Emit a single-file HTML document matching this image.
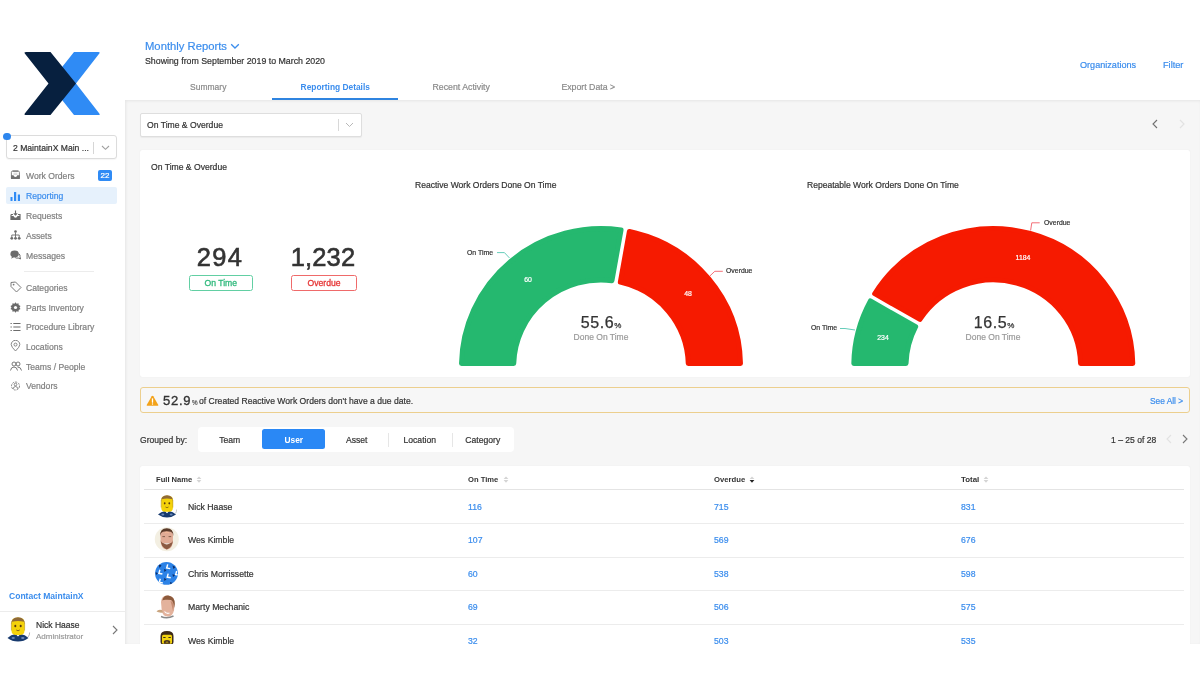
<!DOCTYPE html>
<html><head><meta charset="utf-8">
<style>
*{box-sizing:border-box;margin:0;padding:0}
html,body{width:1200px;height:675px;overflow:hidden;background:#fff}
body{font-family:"Liberation Sans",sans-serif;color:#333;position:relative}
.t,.nav span{will-change:transform;-webkit-text-stroke:0.2px currentColor}
.b{-webkit-text-stroke:0 !important}
.a{position:absolute;white-space:nowrap}
.t{position:absolute;white-space:nowrap;line-height:12px;height:12px}
#side{position:absolute;left:0;top:0;width:125px;height:644px;background:#fff}
#main{position:absolute;left:125px;top:100px;width:1075px;height:544px;background:#f6f6f6;box-shadow:inset 1px 1px 3px rgba(0,0,0,0.07)}
.nav{position:absolute;left:6px;width:110px;height:16px;font-size:8.6px;color:#808080;line-height:16px}
.nav span{position:absolute;left:20px;top:0.5px}
.nav svg{position:absolute;left:4px;top:3px}
.blue{color:#3b8ded}
.card{position:absolute;background:#fff;border-radius:3px}
</style></head><body>

<div id="side">
  <!-- logo -->
  <svg class="a" style="left:0;top:0" width="125" height="125" viewBox="0 0 125 125">
    <path d="M74 52 L98.5 52 Q100.5 52 99.3 53.6 L76 83.5 L99.3 113.4 Q100.5 115 98.5 115 L74 115 L49 83.5 Z" fill="#2f8bf5"/>
    <path d="M26 52 L50.5 52 L76 83.5 L50.5 115 L26 115 Q23.5 115 25 113.2 L48.5 83.5 L25 53.8 Q23.5 52 26 52 Z" fill="#07203f"/>
  </svg>

  <!-- location dropdown -->
  <div class="a" style="left:6px;top:135px;width:110.5px;height:24.3px;border:1px solid #dcdcdc;border-radius:3px;background:#fff;box-shadow:0 1px 1px rgba(0,0,0,0.04)"></div>
  <div class="a" style="left:3.2px;top:133px;width:7.4px;height:7.4px;border-radius:50%;background:#2d86ee"></div>
  <div class="t" style="left:12.5px;top:141.5px;font-size:8.6px;color:#333">2 MaintainX Main ...</div>
  <div class="a" style="left:93px;top:141.5px;width:1px;height:12px;background:#d6d6d6"></div>
  <svg class="a" style="left:100.5px;top:145px" width="9" height="6" viewBox="0 0 9 6"><path d="M1 1 L4.5 4.3 L8 1" fill="none" stroke="#a0a0a0" stroke-width="1.1"/></svg>

  <!-- nav -->
  <div class="nav" style="top:167px">
    <svg width="11" height="10" viewBox="0 0 11 10"><path d="M1.4 8.5 V2.3 Q1.4 1.1 2.6 1.1 H8.2 Q9.4 1.1 9.4 2.3 V8.5" fill="none" stroke="#777" stroke-width="0.9"/><path d="M2.6 1.1 H8.2" stroke="#777" stroke-width="1.2"/><path d="M3.5 3.2 H7.3 M3.5 4.4 H7.3" stroke="#aaa" stroke-width="0.5"/><path d="M1 5.2 H3.5 Q3.8 7 5.4 7 Q7 7 7.3 5.2 H9.8 V9 H1 Z" fill="#707070"/></svg>
    <span>Work Orders</span>
  </div>
  <div class="a" style="left:98px;top:170px;width:14px;height:10.5px;border-radius:2px;background:#2f8bf5"></div><div class="t" style="left:98px;top:169.5px;width:14px;text-align:center;font-size:8px;color:#fff">22</div>
  <div class="a" style="left:6px;top:187px;width:110.5px;height:17px;background:#e6f1fc;border-radius:2px"></div>
  <div class="nav" style="top:187.5px;color:#3b8ded">
    <svg width="11" height="10" viewBox="0 0 11 10"><rect x="0.5" y="6" width="2" height="4" fill="#2f8bf5"/><rect x="4" y="1" width="2.2" height="9" fill="#2f8bf5"/><rect x="7.8" y="3.5" width="2.2" height="6.5" fill="#2f8bf5"/></svg>
    <span>Reporting</span>
  </div>
  <div class="nav" style="top:207px">
    <svg width="11" height="10" viewBox="0 0 11 10"><path d="M1 4.5 L1 9.5 L10 9.5 L10 4.5 L8 4.5 M3 4.5 L1 4.5" fill="none" stroke="#6b6b6b" stroke-width="1.2"/><path d="M1 6 L3.5 6 Q4 7.8 5.5 7.8 Q7 7.8 7.5 6 L10 6 L10 9.5 L1 9.5 Z" fill="#6b6b6b"/><path d="M5.5 0.5 V5 M3.8 3.3 L5.5 5 L7.2 3.3" fill="none" stroke="#6b6b6b" stroke-width="1.1"/></svg>
    <span>Requests</span>
  </div>
  <div class="nav" style="top:227px">
    <svg width="11" height="10" viewBox="0 0 11 10"><circle cx="5.5" cy="1.5" r="1.3" fill="#6b6b6b"/><path d="M5.5 2.5 V5 M1.8 7 V5 H9.2 V7 M5.5 5 V7" fill="none" stroke="#6b6b6b" stroke-width="0.9"/><circle cx="1.8" cy="8.3" r="1.4" fill="#6b6b6b"/><circle cx="5.5" cy="8.3" r="1.4" fill="#6b6b6b"/><circle cx="9.2" cy="8.3" r="1.4" fill="#6b6b6b"/></svg>
    <span>Assets</span>
  </div>
  <div class="nav" style="top:247px">
    <svg width="11" height="10" viewBox="0 0 11 10"><ellipse cx="4.6" cy="4" rx="4.2" ry="3.4" fill="#6b6b6b"/><path d="M2 6.5 L1.2 8.8 L4 7" fill="#6b6b6b"/><path d="M8.8 3.6 Q10.5 4.8 10 6.8 L10.5 9 L8.2 8 Q6.5 8.5 5.2 7.6" fill="none" stroke="#6b6b6b" stroke-width="1"/></svg>
    <span>Messages</span>
  </div>
  <div class="a" style="left:24px;top:271px;width:70px;height:1px;background:#ececec"></div>
  <div class="nav" style="top:279px">
    <svg width="12" height="12" viewBox="0 0 12 12" style="top:2px"><path d="M1 1.5 L5.5 1 L11 6.5 L6.5 11 L1 5.5 Z" fill="none" stroke="#7a7a7a" stroke-width="1" stroke-linejoin="round"/><circle cx="3.6" cy="3.6" r="0.9" fill="#7a7a7a"/></svg>
    <span>Categories</span>
  </div>
  <div class="nav" style="top:299px">
    <svg width="11" height="11" viewBox="0 0 11 11" style="top:2.5px"><path d="M5.5 0.3 L6.6 1.8 L8.5 1.2 L8.7 3.1 L10.5 3.9 L9.5 5.5 L10.5 7.1 L8.7 7.9 L8.5 9.8 L6.6 9.2 L5.5 10.7 L4.4 9.2 L2.5 9.8 L2.3 7.9 L0.5 7.1 L1.5 5.5 L0.5 3.9 L2.3 3.1 L2.5 1.2 L4.4 1.8 Z" fill="#6b6b6b"/><circle cx="5.5" cy="5.5" r="1.6" fill="#fff"/></svg>
    <span>Parts Inventory</span>
  </div>
  <div class="nav" style="top:318.5px">
    <svg width="11" height="10" viewBox="0 0 11 10"><path d="M0.5 1.5 H1.8 M3.3 1.5 H10.5 M0.5 5 H1.8 M3.3 5 H10.5 M0.5 8.5 H1.8 M3.3 8.5 H10.5" stroke="#6b6b6b" stroke-width="1.2"/></svg>
    <span>Procedure Library</span>
  </div>
  <div class="nav" style="top:338px">
    <svg width="11" height="12" viewBox="0 0 11 12" style="top:2px"><path d="M5.5 11 Q1.2 6.8 1.2 4.6 A4.3 4.3 0 0 1 9.8 4.6 Q9.8 6.8 5.5 11 Z" fill="none" stroke="#7a7a7a" stroke-width="0.9"/><circle cx="5.5" cy="4.6" r="1.5" fill="none" stroke="#7a7a7a" stroke-width="0.9"/></svg>
    <span>Locations</span>
  </div>
  <div class="nav" style="top:358px">
    <svg width="12" height="11" viewBox="0 0 12 11" style="top:2.5px"><circle cx="4" cy="3" r="2" fill="none" stroke="#6b6b6b" stroke-width="0.9"/><path d="M0.5 9.5 Q1 6 4 6 Q7 6 7.5 9.5" fill="none" stroke="#6b6b6b" stroke-width="0.9"/><circle cx="8" cy="3" r="2" fill="none" stroke="#6b6b6b" stroke-width="0.9"/><path d="M7.5 6 Q11 6 11.5 9.5" fill="none" stroke="#6b6b6b" stroke-width="0.9"/></svg>
    <span>Teams / People</span>
  </div>
  <div class="nav" style="top:377.5px">
    <svg width="11" height="12" viewBox="0 0 11 12" style="top:2px"><circle cx="5.5" cy="6" r="4" fill="none" stroke="#7a7a7a" stroke-width="0.9" stroke-dasharray="2 1"/><circle cx="5.5" cy="4.5" r="1.3" fill="none" stroke="#7a7a7a" stroke-width="0.9"/><path d="M3 9 Q3.5 6.5 5.5 6.5 Q7.5 6.5 8 9" fill="none" stroke="#7a7a7a" stroke-width="0.9"/></svg>
    <span>Vendors</span>
  </div>

  <!-- bottom -->
  <div class="t b" style="left:8.5px;top:590px;font-size:8.55px;font-weight:700;color:#3b8ded">Contact MaintainX</div>
  <div class="a" style="left:0;top:611px;width:125px;height:1px;background:#ececec"></div>
  <svg class="a" style="left:5px;top:615px" width="30" height="30" viewBox="0 0 30 30">
  <path d="M2.5 23 Q6 19.5 10.5 19 L13 21.3 L15.5 19 Q20 19.5 23.5 23 Q19 26.5 13 26.5 Q7 26.5 2.5 23 Z" fill="#173a6e"/>
  <ellipse cx="8.2" cy="23" rx="1.7" ry="1.1" fill="#6b86b8"/><ellipse cx="17.8" cy="23" rx="1.7" ry="1.1" fill="#6b86b8"/>
  <path d="M11 19.3 L13 21.4 L15 19.3 Z" fill="#f0f0f0"/>
  <path d="M23 22 Q24.8 20 24.6 17.5" fill="none" stroke="#aaa" stroke-width="0.9"/>
  <path d="M6.5 7 Q6.5 3 13 2.6 Q19.5 3 19.5 7 L19.5 15.8 Q19.5 19.8 15.5 20 L10.5 20 Q6.5 19.8 6.5 15.8 Z" fill="#f4d20a"/>
  <path d="M6.2 9.8 Q6 2.4 13 2.3 Q20 2.4 19.8 9.8 L19 6.8 Q13 5 7 6.8 Z" fill="#8f6a38"/>
  <path d="M6.4 8 V15.5 M19.6 8 V15.5" stroke="#b8960c" stroke-width="0.6"/>
  <ellipse cx="10.3" cy="11" rx="1" ry="1.2" fill="#5a3a10"/><ellipse cx="15.7" cy="11" rx="1" ry="1.2" fill="#5a3a10"/>
  <path d="M11.3 15 Q13 16.6 14.7 15" fill="none" stroke="#7a5a10" stroke-width="0.9"/>
</svg>
  <div class="t" style="left:35.8px;top:618.5px;font-size:8.5px;color:#333">Nick Haase</div>
  <div class="t" style="left:35.8px;top:630.5px;font-size:8px;color:#9a9a9a">Administrator</div>
  <svg class="a" style="left:111px;top:625px" width="8" height="10" viewBox="0 0 8 10"><path d="M2 1 L6 5 L2 9" fill="none" stroke="#777" stroke-width="1.1"/></svg>
</div>

<div id="main"></div>

<!-- header -->
<div class="t" style="left:145px;top:40px;font-size:11.25px;line-height:13px;height:13px;color:#3b8ded">Monthly Reports</div>
<svg class="a" style="left:229.5px;top:43px" width="10" height="7" viewBox="0 0 10 7"><path d="M1.2 1.2 L5 5 L8.8 1.2" fill="none" stroke="#3b8ded" stroke-width="1.3"/></svg>
<div class="t" style="left:145px;top:54.5px;font-size:8.8px;color:#333">Showing from September 2019 to March 2020</div>
<div class="t" style="left:1079.5px;top:58.5px;font-size:9.1px;color:#3b8ded">Organizations</div>
<div class="t" style="left:1162.5px;top:58.5px;font-size:9.2px;color:#3b8ded">Filter</div>
<div class="t" style="left:145px;top:81px;width:126.5px;text-align:center;font-size:8.5px;color:#8a8a8a">Summary</div>
<div class="t b" style="left:271.5px;top:81px;width:126.5px;text-align:center;font-size:8.4px;font-weight:700;color:#3b8ded">Reporting Details</div>
<div class="a" style="left:271.5px;top:97.8px;width:126.5px;height:2.2px;background:#2f84e0"></div>
<div class="t" style="left:398px;top:81px;width:126.5px;text-align:center;font-size:8.75px;color:#8a8a8a">Recent Activity</div>
<div class="t" style="left:524.5px;top:81px;width:126.5px;text-align:center;font-size:8.75px;color:#8a8a8a">Export Data &gt;</div>


<!-- main content -->
<div class="a" style="left:140px;top:112.5px;width:221.5px;height:24px;background:#fff;border:1px solid #dedede;border-radius:2px;box-shadow:0 1px 1px rgba(0,0,0,0.05)"></div>
<div class="t" style="left:147px;top:118.5px;font-size:8.6px;color:#333">On Time &amp; Overdue</div>
<div class="a" style="left:337.5px;top:118.5px;width:1px;height:12px;background:#d8d8d8"></div>
<svg class="a" style="left:345px;top:122px" width="9" height="6" viewBox="0 0 9 6"><path d="M1 1 L4.5 4.5 L8 1" fill="none" stroke="#b8b8b8" stroke-width="1"/></svg>
<svg class="a" style="left:1151px;top:119px" width="8" height="10" viewBox="0 0 8 10"><path d="M6 1 L2 5 L6 9" fill="none" stroke="#707070" stroke-width="1.1"/></svg>
<svg class="a" style="left:1178px;top:119px" width="8" height="10" viewBox="0 0 8 10"><path d="M2 1 L6 5 L2 9" fill="none" stroke="#e2e2e2" stroke-width="1.2"/></svg>

<div class="card" style="left:140px;top:149.5px;width:1049.5px;height:227px;border-radius:2px;box-shadow:0 0 1px rgba(0,0,0,0.1)"></div>
<div class="t" style="left:150.5px;top:161px;font-size:8.6px;color:#333">On Time &amp; Overdue</div>
<div class="t" style="left:180px;top:244px;width:80px;height:26px;line-height:26px;text-align:center;font-size:25.5px;letter-spacing:1.3px;color:#333;-webkit-text-stroke:0.6px #333">294</div>
<div class="t" style="left:283px;top:244px;width:80px;height:26px;line-height:26px;text-align:center;font-size:25.5px;letter-spacing:0.15px;color:#333;-webkit-text-stroke:0.6px #333">1,232</div>
<div class="a" style="left:188.5px;top:274.5px;width:63.5px;height:16px;border:1px solid #62cfa3;border-radius:2.5px;color:#2fb97c;font-size:8.6px;font-weight:400;-webkit-text-stroke:0.3px #2fb97c;will-change:transform;line-height:14px;text-align:center">On Time</div>
<div class="a" style="left:290.5px;top:274.5px;width:66px;height:16px;border:1px solid #ef6a6a;border-radius:2.5px;color:#e63535;font-size:8.6px;font-weight:400;-webkit-text-stroke:0.3px #e63535;will-change:transform;line-height:14px;text-align:center">Overdue</div>

<div class="t" style="left:415px;top:179px;font-size:8.55px;color:#333">Reactive Work Orders Done On Time</div>
<div class="t" style="left:807px;top:179px;font-size:8.55px;color:#333">Repeatable Work Orders Done On Time</div>
<svg class="a" style="left:0;top:0" width="1200" height="400" viewBox="0 0 1200 400">
  <g transform="translate(0 366) scale(1 0.985) translate(0 -366)">
  <path d="M513.74 363.50 L461.52 363.50 A139.50 139.50 0 0 1 621.03 227.95 L611.96 279.39 A87.30 87.30 0 0 0 513.74 363.50 Z" fill="#25b86f" stroke="#25b86f" stroke-width="5" stroke-linejoin="round"/>
  <path d="M620.33 280.87 L629.40 229.42 A139.50 139.50 0 0 1 740.48 363.50 L688.26 363.50 A87.30 87.30 0 0 0 620.33 280.87 Z" fill="#f61a00" stroke="#f61a00" stroke-width="5" stroke-linejoin="round"/>
  <path d="M906.04 363.50 L853.82 363.50 A139.50 139.50 0 0 1 870.42 299.96 L915.66 326.08 A87.30 87.30 0 0 0 906.04 363.50 Z" fill="#25b86f" stroke="#25b86f" stroke-width="5" stroke-linejoin="round"/>
  <path d="M919.91 318.72 L874.67 292.60 A139.50 139.50 0 0 1 1132.78 363.50 L1080.56 363.50 A87.30 87.30 0 0 0 919.91 318.72 Z" fill="#f61a00" stroke="#f61a00" stroke-width="5" stroke-linejoin="round"/>
  </g>
  <path d="M497 252.6 H504.4 L509.5 258" fill="none" stroke="#3fc0a8" stroke-width="0.8"/>
  <path d="M709.8 276 L714.8 271.3 H722.8" fill="none" stroke="#f04a55" stroke-width="0.8"/>
  <path d="M840 328.5 H845 L855 330" fill="none" stroke="#3fc0a8" stroke-width="0.8"/>
  <path d="M1030.6 230.5 L1031.8 222.8 H1039.7" fill="none" stroke="#f04a55" stroke-width="0.8"/>
</svg>
<div class="t" style="left:467px;top:246.5px;font-size:6.9px;color:#333">On Time</div>
<div class="t" style="left:726px;top:265px;font-size:6.9px;color:#333">Overdue</div>
<div class="t" style="left:811px;top:322px;font-size:6.9px;color:#333">On Time</div>
<div class="t" style="left:1043.5px;top:217px;font-size:6.9px;color:#333">Overdue</div>
<div class="t" style="left:507.5px;top:274px;width:40px;text-align:center;font-size:6.9px;color:#fff">60</div>
<div class="t" style="left:668px;top:288px;width:40px;text-align:center;font-size:6.9px;color:#fff">48</div>
<div class="t" style="left:863px;top:331.5px;width:40px;text-align:center;font-size:6.9px;color:#fff">234</div>
<div class="t" style="left:1003px;top:252px;width:40px;text-align:center;font-size:6.9px;color:#fff">1184</div>
<div class="t" style="left:559px;top:315.2px;width:84px;height:16px;line-height:16px;text-align:center;font-size:16px;color:#333;-webkit-text-stroke:0.25px #333"><span style="letter-spacing:0.6px">55.6</span><span style="font-size:8px;letter-spacing:0">%</span></div>
<div class="t" style="left:561px;top:331px;width:80px;text-align:center;font-size:8.5px;color:#999">Done On Time</div>
<div class="t" style="left:951.5px;top:315.2px;width:84px;height:16px;line-height:16px;text-align:center;font-size:16px;color:#333;-webkit-text-stroke:0.25px #333"><span style="letter-spacing:0.6px">16.5</span><span style="font-size:8px;letter-spacing:0">%</span></div>
<div class="t" style="left:953px;top:331px;width:80px;text-align:center;font-size:8.5px;color:#999">Done On Time</div>

<!-- alert -->
<div class="a" style="left:140px;top:386.8px;width:1049.5px;height:26.4px;border:1px solid #eccf8e;border-radius:3px;background:#f7f7f7"></div>
<svg class="a" style="left:146px;top:395px" width="13" height="11.5" viewBox="0 0 13 11.5"><path d="M6.5 0.8 Q7 0.8 7.3 1.3 L12.3 10 Q12.6 10.8 11.8 10.8 L1.2 10.8 Q0.4 10.8 0.7 10 L5.7 1.3 Q6 0.8 6.5 0.8 Z" fill="#f3a219"/><path d="M6.5 3.8 V7.2" stroke="#fff" stroke-width="1.3" stroke-linecap="round"/><circle cx="6.5" cy="9" r="0.7" fill="#fff"/></svg>
<div class="t" style="left:163px;top:394.3px;height:14px;line-height:14px;font-size:13px;letter-spacing:0.75px;color:#333;-webkit-text-stroke:0.35px #333">52.9</div>
<div class="t" style="left:191.6px;top:397.3px;font-size:6.3px;color:#555">%</div>
<div class="t" style="left:199.4px;top:395px;font-size:8.6px;color:#333">of Created Reactive Work Orders don&#39;t have a due date.</div>
<div class="t" style="left:1149.5px;top:394.5px;font-size:8.35px;color:#3b8ded">See All &gt;</div>

<!-- grouped by -->
<div class="t" style="left:140.4px;top:433.5px;font-size:8.55px;color:#333">Grouped by:</div>
<div class="a" style="left:198px;top:426.5px;width:315.5px;height:25.5px;background:#fff;border-radius:4px"></div>
<div class="a" style="left:261.5px;top:429px;width:63.5px;height:20.3px;background:#2a88f5;border-radius:2.5px"></div>
<div class="a" style="left:388px;top:432.5px;width:1px;height:14.5px;background:#e6e6e6"></div>
<div class="a" style="left:451.5px;top:432.5px;width:1px;height:14.5px;background:#e6e6e6"></div>
<div class="t" style="left:198px;top:433.5px;width:63.5px;text-align:center;font-size:8.6px;color:#333">Team</div>
<div class="t b" style="left:261.5px;top:433.5px;width:63.5px;text-align:center;font-size:8.4px;font-weight:700;color:#fff">User</div>
<div class="t" style="left:325px;top:433.5px;width:63.5px;text-align:center;font-size:8.6px;color:#333">Asset</div>
<div class="t" style="left:388px;top:433.5px;width:63.5px;text-align:center;font-size:8.6px;color:#333">Location</div>
<div class="t" style="left:450.5px;top:433.5px;width:63.5px;text-align:center;font-size:8.6px;color:#333">Category</div>
<div class="t" style="left:1110.8px;top:433.5px;font-size:8.55px;color:#333">1 – 25 of 28</div>
<svg class="a" style="left:1165px;top:434px" width="8" height="10" viewBox="0 0 8 10"><path d="M6 1 L2 5 L6 9" fill="none" stroke="#e2e2e2" stroke-width="1.1"/></svg>
<svg class="a" style="left:1181px;top:434px" width="8" height="10" viewBox="0 0 8 10"><path d="M2 1 L6 5 L2 9" fill="none" stroke="#777" stroke-width="1.1"/></svg>

<!-- table -->
<div class="card" style="left:140px;top:465.5px;width:1049.5px;height:200px;border-radius:2px 2px 0 0;box-shadow:0 0 1px rgba(0,0,0,0.1)"></div>
<div class="t b" style="left:155.5px;top:474px;font-size:7.6px;font-weight:700;color:#333">Full Name</div>
<div class="t b" style="left:467.8px;top:474px;font-size:7.6px;font-weight:700;color:#333">On Time</div>
<div class="t b" style="left:713.7px;top:474px;font-size:7.7px;font-weight:700;color:#333">Overdue</div>
<div class="t b" style="left:960.8px;top:474px;font-size:7.9px;font-weight:700;color:#333">Total</div>
<svg class="a" style="left:196.2px;top:476px" width="6" height="8" viewBox="0 0 6 8"><path d="M0.6 3 L3 0.6 L5.4 3 Z" fill="#d4d4d4"/><path d="M0.6 4.1 L3 6.7 L5.4 4.1 Z" fill="#d4d4d4"/></svg><svg class="a" style="left:502.8px;top:476px" width="6" height="8" viewBox="0 0 6 8"><path d="M0.6 3 L3 0.6 L5.4 3 Z" fill="#d4d4d4"/><path d="M0.6 4.1 L3 6.7 L5.4 4.1 Z" fill="#d4d4d4"/></svg><svg class="a" style="left:748.9px;top:476px" width="6" height="8" viewBox="0 0 6 8"><path d="M0.6 3 L3 0.6 L5.4 3 Z" fill="#d4d4d4"/><path d="M0.6 4.1 L3 6.7 L5.4 4.1 Z" fill="#222"/></svg><svg class="a" style="left:983.3px;top:476px" width="6" height="8" viewBox="0 0 6 8"><path d="M0.6 3 L3 0.6 L5.4 3 Z" fill="#d4d4d4"/><path d="M0.6 4.1 L3 6.7 L5.4 4.1 Z" fill="#d4d4d4"/></svg>
<div class="a" style="left:144px;top:489px;width:1040px;height:1px;background:#e4e4e4"></div>
<div class="t" style="left:188px;top:500.5px;font-size:8.7px;color:#333">Nick Haase</div>
<div class="t" style="left:467.8px;top:500.5px;font-size:8.7px;color:#3b8ded">116</div>
<div class="t" style="left:713.7px;top:500.5px;font-size:8.7px;color:#3b8ded">715</div>
<div class="t" style="left:960.8px;top:500.5px;font-size:8.7px;color:#3b8ded">831</div>
<div class="a" style="left:144px;top:523.0px;width:1040px;height:1px;background:#ececec"></div>
<div class="t" style="left:188px;top:534px;font-size:8.7px;color:#333">Wes Kimble</div>
<div class="t" style="left:467.8px;top:534px;font-size:8.7px;color:#3b8ded">107</div>
<div class="t" style="left:713.7px;top:534px;font-size:8.7px;color:#3b8ded">569</div>
<div class="t" style="left:960.8px;top:534px;font-size:8.7px;color:#3b8ded">676</div>
<div class="a" style="left:144px;top:556.5px;width:1040px;height:1px;background:#ececec"></div>
<div class="t" style="left:188px;top:567.5px;font-size:8.7px;color:#333">Chris Morrissette</div>
<div class="t" style="left:467.8px;top:567.5px;font-size:8.7px;color:#3b8ded">60</div>
<div class="t" style="left:713.7px;top:567.5px;font-size:8.7px;color:#3b8ded">538</div>
<div class="t" style="left:960.8px;top:567.5px;font-size:8.7px;color:#3b8ded">598</div>
<div class="a" style="left:144px;top:590.0px;width:1040px;height:1px;background:#ececec"></div>
<div class="t" style="left:188px;top:601px;font-size:8.7px;color:#333">Marty Mechanic</div>
<div class="t" style="left:467.8px;top:601px;font-size:8.7px;color:#3b8ded">69</div>
<div class="t" style="left:713.7px;top:601px;font-size:8.7px;color:#3b8ded">506</div>
<div class="t" style="left:960.8px;top:601px;font-size:8.7px;color:#3b8ded">575</div>
<div class="a" style="left:144px;top:623.5px;width:1040px;height:1px;background:#ececec"></div>
<div class="t" style="left:188px;top:634.5px;font-size:8.7px;color:#333">Wes Kimble</div>
<div class="t" style="left:467.8px;top:634.5px;font-size:8.7px;color:#3b8ded">32</div>
<div class="t" style="left:713.7px;top:634.5px;font-size:8.7px;color:#3b8ded">503</div>
<div class="t" style="left:960.8px;top:634.5px;font-size:8.7px;color:#3b8ded">535</div>

<!-- avatars -->
<svg class="a" style="left:152px;top:492px" width="30" height="30" viewBox="0 0 30 30">
  <path d="M6 22.5 Q9 19.5 13 19 L15 21 L17 19 Q21 19.5 24 22.5 Q20 25.5 15 25.5 Q10 25.5 6 22.5 Z" fill="#173a6e"/>
  <ellipse cx="10.8" cy="22.5" rx="1.5" ry="1" fill="#6b86b8"/><ellipse cx="19.2" cy="22.5" rx="1.5" ry="1" fill="#6b86b8"/>
  <path d="M13.2 19.3 L15 21.2 L16.8 19.3 Z" fill="#f0f0f0"/>
  <path d="M23.5 21.5 Q24.8 19.8 24.5 17.5" fill="none" stroke="#bbb" stroke-width="0.8"/>
  <path d="M9.3 7.5 Q9.3 4 15 3.6 Q20.9 4 20.9 7.5 L20.9 16 Q20.9 19.5 17 19.7 L13 19.7 Q9.3 19.5 9.3 16 Z" fill="#f4d20a"/>
  <path d="M9 10 Q8.8 3.4 15 3.3 Q21.2 3.4 21 10 L20.3 7.3 Q15 5.6 9.7 7.3 Z" fill="#8f6a38"/>
  <path d="M9.2 8 V15.5 M20.8 8 V15.5" stroke="#b8960c" stroke-width="0.6"/>
  <ellipse cx="12.7" cy="11.3" rx="0.9" ry="1.1" fill="#5a3a10"/><ellipse cx="17.3" cy="11.3" rx="0.9" ry="1.1" fill="#5a3a10"/>
  <path d="M13.5 15 Q15 16.4 16.5 15" fill="none" stroke="#7a5a10" stroke-width="0.8"/>
</svg>
<svg class="a" style="left:152px;top:524px" width="30" height="30" viewBox="0 0 30 30">
  <circle cx="14.8" cy="15.2" r="12" fill="#f3efe2"/>
  <path d="M8.4 11 Q8.4 4.8 14.8 4.8 Q21 4.8 21 11 L20.8 19 Q19.5 25.5 14.8 25.5 Q10.1 25.5 8.8 19 Z" fill="#e0ab95"/>
  <path d="M8.2 12 Q7.8 4.2 14.8 4.2 Q21.6 4.2 21.3 12 L20.6 9.3 Q19.5 7.3 14.8 7.3 Q10.1 7.3 9 9.3 Z" fill="#5a3b2a"/>
  <path d="M8.6 16 Q9 23.5 14.8 25.4 Q20.6 23.5 20.9 16 Q20 19.4 17.8 19.3 L14.8 19.3 L11.8 19.3 Q9.6 19.4 8.6 16 Z" fill="#8a5a42"/>
  <path d="M11.2 18.8 Q14.8 22.4 18.4 18.8 Q14.8 19.9 11.2 18.8 Z" fill="#fbf3ee"/>
  <path d="M10.4 12.6 H13 M16.6 12.6 H19.2" stroke="#6a4a38" stroke-width="0.8"/>
  <path d="M13 8.6 Q15 7.8 17 8.8" fill="none" stroke="#f4b898" stroke-width="1.2"/>
</svg>
<svg class="a" style="left:152px;top:558px" width="30" height="30" viewBox="0 0 30 30">
  <defs><clipPath id="cc"><circle cx="14.5" cy="15.4" r="11.4"/></clipPath></defs>
  <circle cx="14.5" cy="15.4" r="11.4" fill="#2c82e6"/>
  <g clip-path="url(#cc)">
    <g fill="#0c2c66"><path d="M6.5 6 L9.5 7.5 L7.5 10 Z"/><path d="M12 11 L14.5 12 L12.5 14 Z"/><path d="M20.5 7.5 L23.5 9 L21.5 11 Z"/><path d="M3.5 14 L6 15.2 L4 17 Z"/><path d="M12 20 L14.5 21.2 L12.5 23 Z"/><path d="M20.5 16 L23 17.2 L21 19 Z"/><path d="M18 24 L20.5 25 L18.5 27 Z"/></g>
    <g fill="#fff"><path d="M15 6.2 L16.4 6.6 L15.6 9.4 L18.4 9.9 L18 11.3 L13.8 10.5 Z"/><path d="M7.2 11.6 L8.6 12 L7.8 14.8 L10.6 15.3 L10.2 16.7 L6 15.9 Z"/><path d="M15.5 15.4 L16.9 15.8 L16.1 18.6 L18.9 19.1 L18.5 20.5 L14.3 19.7 Z"/><path d="M24 12.8 L25.4 13.2 L24.6 16 L26 16.3 L25.6 17.7 L22.8 17.1 Z"/><path d="M7.6 20.6 L9 21 L8.2 23.8 L11 24.3 L10.6 25.7 L6.4 24.9 Z"/></g>
  </g>
</svg>
<svg class="a" style="left:152px;top:592px" width="30" height="30" viewBox="0 0 30 30">
  <path d="M9 10 Q9.5 3.5 15.5 3.6 Q22.8 4 22.5 11.5 L22 18.5 Q20.5 24.5 16 24.5 Q10.8 24.5 9.8 19 Z" fill="#e3b29c"/>
  <path d="M10.3 8.5 Q11.5 3 16.5 3.6 Q22.8 4.6 22.8 12 L22.2 16 Q21.5 9 19 8 Q16 7.5 13.5 7.8 Q11.5 8 10.3 8.5 Z" fill="#8c5a3c"/>
  <path d="M18.5 9 Q22 10 21.8 15 L21 19 Q20 14 18.5 9 Z" fill="#b87a60" opacity="0.7"/>
  <path d="M4.5 19.5 Q6 17 10 18 L11 20.5 Q7 21 4.5 19.5 Z" fill="#c9a47e"/>
  <path d="M12.5 19.5 Q14.5 22 17.5 21" fill="none" stroke="#fff" stroke-width="1.2"/>
  <path d="M9 24.5 Q15 27.2 21.5 24" fill="none" stroke="#8a8a8a" stroke-width="1.4"/>
</svg>
<svg class="a" style="left:158.5px;top:629.5px" width="16" height="16" viewBox="0 0 16 16">
  <path d="M1.5 6 Q1.5 1 8 1 Q14.5 1 14.5 6 L14.5 12 Q14.5 15.5 8 15.5 Q1.5 15.5 1.5 12 Z" fill="#3d2a18"/>
  <rect x="3" y="4.8" width="10" height="9" rx="1.5" fill="#f2d30f"/>
  <path d="M4.8 11 Q8 9.2 11.2 11 L11 13.8 L5 13.8 Z" fill="#4a3420"/>
  <rect x="4.2" y="7" width="2.4" height="1" fill="#3d2a18"/><rect x="9.4" y="7" width="2.4" height="1" fill="#3d2a18"/>
  <path d="M6.8 12.4 Q8 11.6 9.2 12.4" fill="none" stroke="#f2d30f" stroke-width="0.7"/>
</svg>

<div class="a" style="left:0;top:644px;width:1200px;height:31px;background:#fff"></div>
</body></html>
